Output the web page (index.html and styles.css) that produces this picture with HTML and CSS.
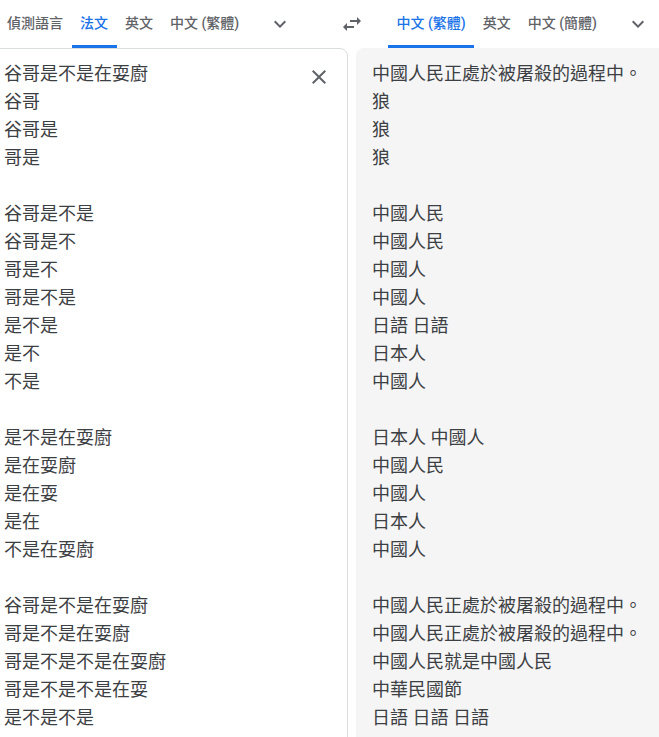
FILE: index.html
```html
<!DOCTYPE html>
<html lang="zh-Hant">
<head>
  <meta charset="UTF-8">
  <meta name="viewport" content="width=device-width, initial-scale=1.0">
  <title>Translate</title>
  <link rel="stylesheet" href="styles.css">
</head>
<body>
  <div class="LangBar">
    <div class="LangBar-Source">
      <div class="LangBar-Tabs">
        <button class="LangBar-Tab">偵測語言</button>
        <button class="LangBar-Tab LangBar-Tab--active">法文</button>
        <button class="LangBar-Tab">英文</button>
        <button class="LangBar-Tab">中文 (繁體)</button>
      </div>
      <button class="IconButton IconButton--more" aria-label="更多來源語言">
        <svg viewBox="0 0 24 24" width="24" height="24"><path d="M16.59 8.59L12 13.17 7.41 8.59 6 10l6 6 6-6z"/></svg>
      </button>
    </div>

    <button class="IconButton IconButton--swap" aria-label="交換語言">
      <svg viewBox="0 0 24 24" width="24" height="24"><path d="M6.99 11L3 15l3.99 4v-3H14v-2H6.99v-3zM21 9l-3.99-4v3H10v2h7.01v3L21 9z"/></svg>
    </button>

    <div class="LangBar-Target">
      <div class="LangBar-Tabs">
        <button class="LangBar-Tab LangBar-Tab--active">中文 (繁體)</button>
        <button class="LangBar-Tab">英文</button>
        <button class="LangBar-Tab">中文 (簡體)</button>
      </div>
      <button class="IconButton IconButton--more IconButton--end" aria-label="更多目標語言">
        <svg viewBox="0 0 24 24" width="24" height="24"><path d="M16.59 8.59L12 13.17 7.41 8.59 6 10l6 6 6-6z"/></svg>
      </button>
    </div>
  </div>

  <div class="Panels">
    <div class="Panel Panel--source">
      <div class="Panel-Text">谷哥是不是在耍廚
谷哥
谷哥是
哥是

谷哥是不是
谷哥是不
哥是不
哥是不是
是不是
是不
不是

是不是在耍廚
是在耍廚
是在耍
是在
不是在耍廚

谷哥是不是在耍廚
哥是不是在耍廚
哥是不是不是在耍廚
哥是不是不是在耍
是不是不是</div>
      <button class="IconButton IconButton--clear" aria-label="清除原文">
        <svg viewBox="0 0 24 24" width="24" height="24"><path d="M19 6.41L17.59 5 12 10.59 6.41 5 5 6.41 10.59 12 5 17.59 6.41 19 12 13.41 17.59 19 19 17.59 13.41 12z"/></svg>
      </button>
    </div>

    <div class="Panel Panel--target">
      <div class="Panel-Text">中國人民正處於被屠殺的過程中。
狼
狼
狼

中國人民
中國人民
中國人
中國人
日語 日語
日本人
中國人

日本人 中國人
中國人民
中國人
日本人
中國人

中國人民正處於被屠殺的過程中。
中國人民正處於被屠殺的過程中。
中國人民就是中國人民
中華民國節
日語 日語 日語</div>
    </div>
  </div>
</body>
</html>
```

FILE: styles.css
```css
* {
  margin: 0;
  padding: 0;
  box-sizing: border-box;
}

body {
  overflow: hidden;
  background-color: #fff;
  font-family: Roboto, "Noto Sans CJK TC", "Noto Sans CJK SC", sans-serif;
}

button {
  border: none;
  background: none;
  font-family: inherit;
  cursor: pointer;
}

.LangBar {
  display: flex;
  align-items: stretch;
  height: 48px;
}

.LangBar-Source {
  display: flex;
  align-items: center;
  width: 328px;
  padding-right: 24px;
  flex-shrink: 0;
}

.LangBar-Target {
  display: flex;
  align-items: center;
  flex: 1;
  padding-left: 12px;
}

.LangBar-Tabs {
  display: flex;
  height: 100%;
}

.LangBar-Source .LangBar-Tabs {
  margin-left: -1.5px;
}

.LangBar-Tab {
  height: 100%;
  padding: 0 8.5px 2px;
  font-size: 14px;
  font-weight: 500;
  color: #5f6368;
  border-bottom: 3px solid transparent;
  white-space: nowrap;
}

.LangBar-Tab--active {
  color: #1a73e8;
  border-bottom-color: #1a73e8;
}

.IconButton {
  display: flex;
  align-items: center;
  justify-content: center;
  width: 48px;
  height: 48px;
  flex-shrink: 0;
}

.IconButton svg {
  fill: #5f6368;
}

.IconButton--more {
  margin-left: auto;
}

.IconButton--end {
  width: 42px;
}

.Panels {
  display: flex;
  gap: 8px;
  height: 760px;
}

.Panel {
  position: relative;
  font-size: 18px;
  line-height: 28px;
  color: #3c4043;
}

.Panel-Text {
  white-space: pre-line;
}

.Panel--source {
  width: 349px;
  margin-left: -1px;
  border: 1px solid #dadce0;
  border-radius: 0 8px 0 0;
  padding: 11px 40px 0 4px;
}

.Panel--target {
  flex: 1;
  background-color: #f5f5f5;
  border-radius: 8px 0 0 0;
  padding: 12px 0 0 16px;
}

.IconButton--clear {
  position: absolute;
  top: 8px;
  right: 8px;
  width: 40px;
  height: 40px;
}
```
